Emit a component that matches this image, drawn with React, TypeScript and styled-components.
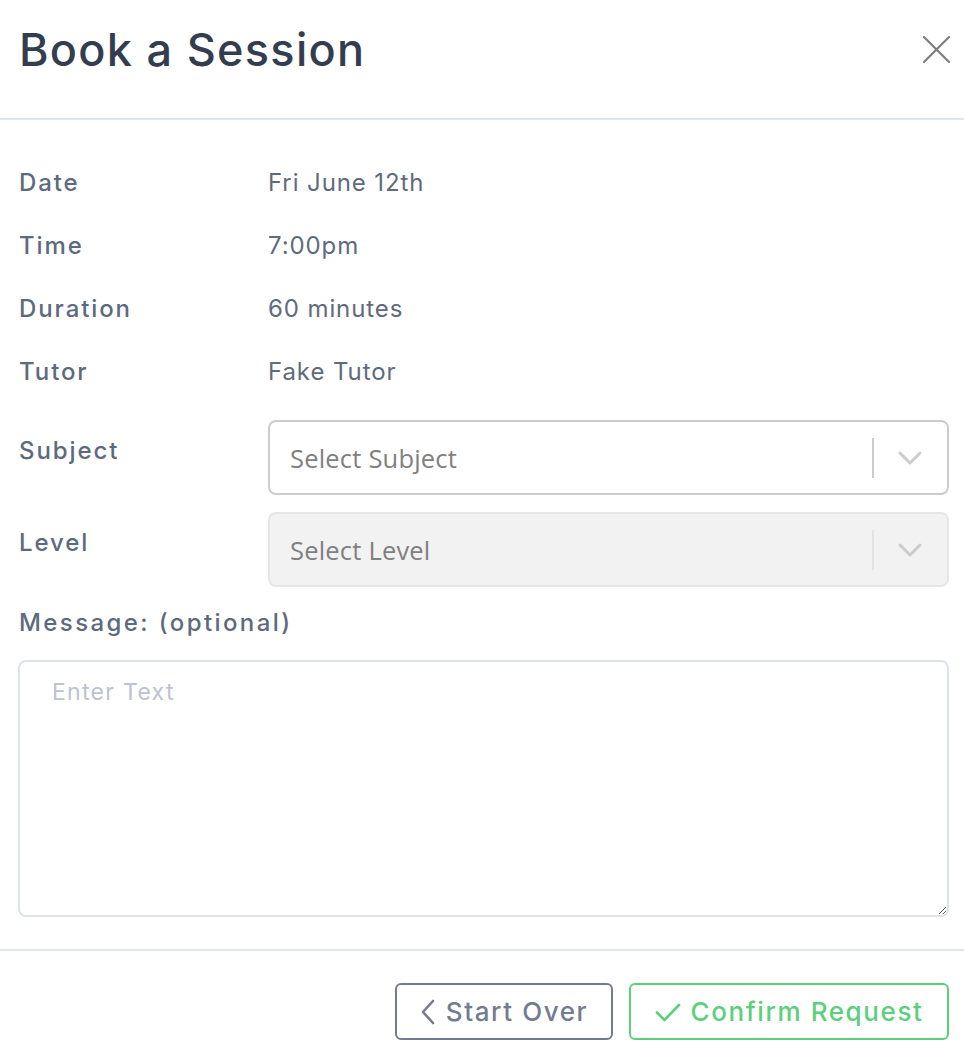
import styled, { createGlobalStyle } from 'styled-components';

const GlobalStyle = createGlobalStyle`
  html, body {
    margin: 0;
    padding: 0;
    background: #fff;
  }
  * {
    box-sizing: border-box;
  }
`;

const details = [
  { label: 'Date', value: 'Fri June 12th' },
  { label: 'Time', value: '7:00pm' },
  { label: 'Duration', value: '60 minutes' },
  { label: 'Tutor', value: 'Fake Tutor' },
];

const Chevron = () => (
  <svg width="24" height="14" viewBox="0 0 24 14" fill="none">
    <path d="M2 2l10 10 10-10" stroke="#cccccc" strokeWidth="3" strokeLinecap="round" strokeLinejoin="round" />
  </svg>
);

const App = () => {
  return (
    <S.Modal>
      <GlobalStyle />
      <S.Header>
        <S.Title>Book a Session</S.Title>
        <S.Close aria-label="close">
          <svg width="27" height="27" viewBox="0 0 27 27" fill="none">
            <path d="M1 1l25 25M26 1L1 26" stroke="#7d7d7d" strokeWidth="2.2" strokeLinecap="round" />
          </svg>
        </S.Close>
      </S.Header>

      <S.Body>
        {details.map((d) => (
          <S.InfoRow key={d.label}>
            <S.Label>{d.label}</S.Label>
            <S.Value>{d.value}</S.Value>
          </S.InfoRow>
        ))}

        <S.FieldRow>
          <S.FieldLabel>Subject</S.FieldLabel>
          <S.Select>
            <S.Placeholder>Select Subject</S.Placeholder>
            <S.Indicator>
              <S.Separator />
              <Chevron />
            </S.Indicator>
          </S.Select>
        </S.FieldRow>

        <S.FieldRow>
          <S.FieldLabel>Level</S.FieldLabel>
          <S.Select $disabled>
            <S.Placeholder>Select Level</S.Placeholder>
            <S.Indicator>
              <S.Separator $disabled />
              <Chevron />
            </S.Indicator>
          </S.Select>
        </S.FieldRow>

        <S.MessageLabel>Message: (optional)</S.MessageLabel>
        <S.TextArea placeholder="Enter Text" />
      </S.Body>

      <S.Footer>
        <S.Button $variant="back">
          <svg width="16" height="26" viewBox="0 0 16 26" fill="none">
            <path d="M13 2L3 13l10 11" stroke="#737c8f" strokeWidth="2.6" strokeLinecap="round" strokeLinejoin="round" />
          </svg>
          Start Over
        </S.Button>
        <S.Button $variant="confirm">
          <svg width="26" height="20" viewBox="0 0 26 20" fill="none">
            <path d="M2 10.5l7.5 7.5L24 3" stroke="#5ccf7d" strokeWidth="2.6" strokeLinecap="round" strokeLinejoin="round" />
          </svg>
          Confirm Request
        </S.Button>
      </S.Footer>
    </S.Modal>
  );
};

export default App;

const S = {
  Modal: styled.div`
    width: 964px;
    height: 1062px;
    background: #fff;
    font-family: Inter, 'Noto Sans', sans-serif;
    color: #5d6a7e;
    display: flex;
    flex-direction: column;
  `,
  Header: styled.div`
    height: 120px;
    padding: 0 14px 20px 19px;
    display: flex;
    align-items: center;
    justify-content: space-between;
    border-bottom: 2px solid #dfe6ee;
  `,
  Title: styled.h1`
    margin: 0;
    font-size: 45px;
    font-weight: 500;
    color: #343d4f;
    letter-spacing: 1.3px;
  `,
  Close: styled.button`
    border: none;
    background: none;
    padding: 0;
    display: flex;
    cursor: pointer;
  `,
  Body: styled.div`
    padding: 31px 15px 0 18px;
    display: flex;
    flex-direction: column;
  `,
  InfoRow: styled.div`
    display: grid;
    grid-template-columns: 249px 1fr;
    align-items: center;
    height: 63px;
    padding-left: 1px;
  `,
  Label: styled.div`
    font-size: 24px;
    font-weight: 500;
    letter-spacing: 1.9px;
    color: #5d6a7e;
  `,
  Value: styled.div`
    font-size: 24px;
    font-weight: 400;
    letter-spacing: 0.9px;
    color: #5f6b7d;
  `,
  FieldRow: styled.div`
    display: grid;
    grid-template-columns: 249px 1fr;
    align-items: start;
    margin-top: 17px;
    padding-left: 1px;
  `,
  FieldLabel: styled.div`
    font-size: 24px;
    font-weight: 500;
    letter-spacing: 1.9px;
    line-height: 36px;
    padding-top: 13px;
    color: #5d6a7e;
  `,
  Select: styled.div<{ $disabled?: boolean }>`
    height: 75px;
    border: 2px solid ${(p) => (p.$disabled ? '#e6e6e6' : '#cccccc')};
    background: ${(p) => (p.$disabled ? '#f2f2f2' : '#fff')};
    border-radius: 8px;
    display: flex;
    align-items: center;
    padding-left: 20px;
  `,
  Placeholder: styled.div`
    flex: 1;
    font-family: 'Open Sans', 'Noto Sans', sans-serif;
    font-size: 25.5px;
    color: #808080;
    letter-spacing: 0.2px;
  `,
  Indicator: styled.div`
    display: flex;
    align-items: center;
    height: 100%;
    gap: 24px;
    padding-right: 25px;
  `,
  Separator: styled.div<{ $disabled?: boolean }>`
    width: 2px;
    height: 40px;
    background: ${(p) => (p.$disabled ? '#e3e3e3' : '#cccccc')};
  `,
  MessageLabel: styled.div`
    margin-top: 20px;
    line-height: 32px;
    font-size: 24px;
    font-weight: 500;
    letter-spacing: 2.4px;
    color: #5d6a7e;
    padding-left: 1px;
  `,
  TextArea: styled.textarea`
    margin-top: 21px;
    width: 931px;
    height: 257px;
    border: 2px solid #dde3ec;
    border-radius: 8px;
    padding: 16px 32px;
    font-family: Inter, 'Noto Sans', sans-serif;
    font-size: 23px;
    letter-spacing: 1.3px;
    color: #343d4f;
    resize: vertical;
    outline: none;

    &::placeholder {
      color: #b9c3d3;
    }
  `,
  Footer: styled.div`
    margin-top: 32px;
    border-top: 2px solid #dfe6ee;
    padding: 32px 15px 0 0;
    display: flex;
    justify-content: flex-end;
    gap: 16px;
  `,
  Button: styled.button<{ $variant: 'back' | 'confirm' }>`
    height: 57px;
    width: ${(p) => (p.$variant === 'back' ? '218px' : '320px')};
    border: 2px solid ${(p) => (p.$variant === 'back' ? '#737c8f' : '#5ccf7d')};
    color: ${(p) => (p.$variant === 'back' ? '#737c8f' : '#5ccf7d')};
    background: #fff;
    border-radius: 6px;
    font-family: Inter, 'Noto Sans', sans-serif;
    font-size: 26px;
    font-weight: 500;
    letter-spacing: 1.6px;
    display: flex;
    align-items: center;
    justify-content: center;
    gap: 10px;
    cursor: pointer;
  `,
};
